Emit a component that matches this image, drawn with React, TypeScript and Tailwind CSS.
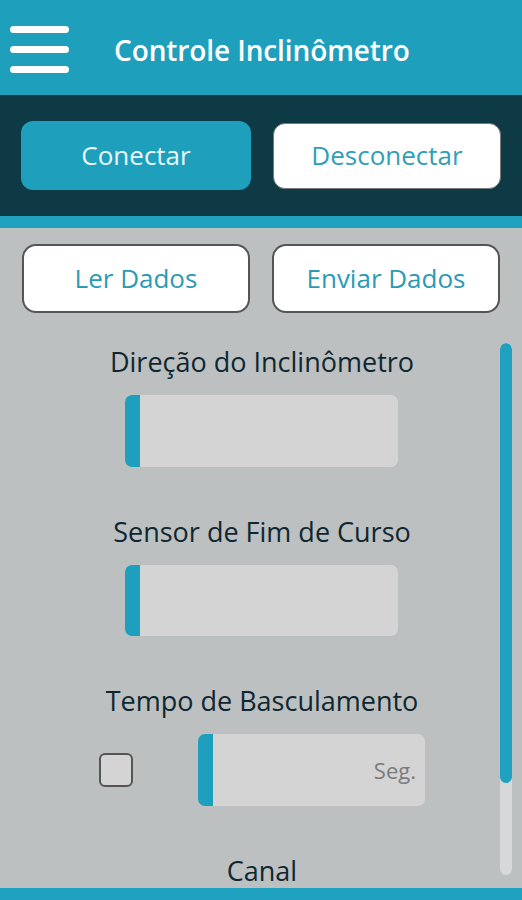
import { useState } from 'react';

function ValueBox({ className, placeholder }: { className: string; placeholder?: string }) {
  return (
    <div className={`flex h-[72px] overflow-hidden rounded-[7px] bg-[#d4d4d4] ${className}`}>
      <div className="w-[15px] shrink-0 bg-[#1d9fbd]" />
      <div className="flex flex-1 items-center justify-end pr-[9px] text-[22px] text-[#7b7b7b]">
        {placeholder}
      </div>
    </div>
  );
}

export default function App() {
  const [checked, setChecked] = useState(false);

  return (
    <div className="flex h-[900px] w-[522px] flex-col overflow-hidden bg-[#bcc0c1] font-['Open_Sans',sans-serif]">
      {/* top bar */}
      <div className="flex h-[95px] shrink-0 items-center bg-[#1e9fbc] pt-[4px]">
        <div className="ml-[10px] flex w-[59px] flex-col gap-[13px]">
          <span className="h-[7px] rounded-full bg-white" />
          <span className="h-[7px] rounded-full bg-white" />
          <span className="h-[7px] rounded-full bg-white" />
        </div>
        <h1 className="ml-[45px] text-[28px] font-semibold tracking-[-0.1px] text-white">Controle Inclinômetro</h1>
      </div>

      {/* connection panel */}
      <div className="flex h-[121px] shrink-0 items-center gap-[22px] bg-[#0e3a46] px-[21px]">
        <button className="h-[69px] w-[230px] rounded-[12px] bg-[#1e9fbc] text-[26px] text-[#eaf6f9]">Conectar</button>
        <button className="h-[66px] w-[228px] rounded-[12px] border border-[#777] bg-white text-[26px] text-[#2f9fb8]">
          Desconectar
        </button>
      </div>
      <div className="h-[12px] shrink-0 bg-[#1ea2bf]" />

      <div className="flex gap-[22px] px-[22px] pt-[16px]">
        <button className="h-[69px] w-[229px] rounded-[14px] border-2 border-[#555] bg-white text-[26px] text-[#2a9bb5]">
          Ler Dados
        </button>
        <button className="h-[69px] w-[229px] rounded-[14px] border-2 border-[#555] bg-white text-[26px] text-[#2a9bb5]">
          Enviar Dados
        </button>
      </div>

      <div className="relative flex flex-1 overflow-hidden">
        <div className="flex w-[500px] flex-col text-[27px] text-[#0f2730]">
          <p className="mt-[32px] text-center leading-[34px] pl-[24px]">Direção do Inclinômetro</p>
          <ValueBox className="ml-[125px] mt-[16px] w-[273px]" />

          <p className="mt-[48px] text-center leading-[34px] pl-[24px]">Sensor de Fim de Curso</p>
          <ValueBox className="ml-[125px] mt-[16px] w-[273px]" />

          <p className="mt-[48px] text-center leading-[34px] pl-[24px]">Tempo de Basculamento</p>
          <div className="mt-[16px] flex items-center">
            <button
              onClick={() => setChecked(!checked)}
              className="ml-[99px] h-[34px] w-[34px] rounded-[6px] border-2 border-[#555] bg-[#d4d4d4]"
            />
            <ValueBox className="ml-[65px] w-[227px]" placeholder="Seg." />
          </div>

          <p className="mt-[48px] text-center leading-[34px] pl-[24px]">Canal</p>
        </div>

        {/* scrollbar */}
        <div className="absolute left-[500px] top-[30px] flex h-[532px] w-[12px] flex-col overflow-hidden rounded-full bg-[#d6d8d9]">
          <div className="h-[440px] rounded-full bg-[#1ea2bf]" />
        </div>
      </div>

      <div className="h-[12px] shrink-0 bg-[#1ea2bf]" />
    </div>
  );
}
